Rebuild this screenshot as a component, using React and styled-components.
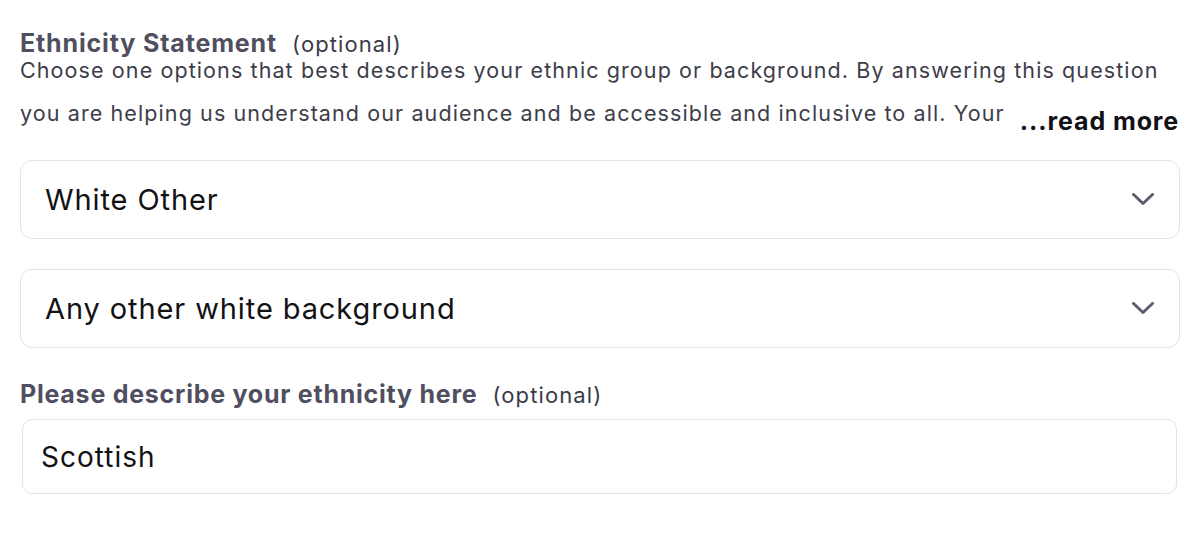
import React from "react";
import styled, { createGlobalStyle } from "styled-components";

const Global = createGlobalStyle`
  html, body { margin: 0; padding: 0; background: #ffffff; }
  body { font-family: Inter, "Noto Sans", sans-serif; }
  * { box-sizing: border-box; }
`;

const Page = styled.div`
  width: 1200px;
  height: 538px;
  padding: 31px 20px 0 20px;
  display: flex;
  flex-direction: column;
`;

const LabelRow = styled.div`
  display: flex;
  align-items: baseline;
  gap: 15px;
  line-height: 25px;
  color: #4f4f60;
  margin-top: ${(p) => p.$mt || 0}px;
`;

const LabelText = styled.span`
  font-weight: 700;
  font-size: 25px;
  letter-spacing: ${(p) => p.$ls ?? 0.85}px;
`;

const Optional = styled.span`
  font-weight: 400;
  font-size: 22px;
  letter-spacing: 1.1px;
  color: #3a3a46;
`;

const Description = styled.p`
  margin: -8px 0 0 0;
  font-size: 21.5px;
  letter-spacing: 1.1px;
  line-height: 43px;
  color: #3d3d49;
  width: 1160px;
  height: 86px;
`;

const ReadMore = styled.button`
  display: inline-block;
  margin-left: 15px;
  vertical-align: -9px;
  border: none;
  background: transparent;
  padding: 0;
  font-family: inherit;
  font-weight: 700;
  font-size: 25px;
  line-height: 26px;
  letter-spacing: 0.9px;
  color: #111116;
  cursor: pointer;
`;

const Select = styled.div`
  display: flex;
  align-items: center;
  justify-content: space-between;
  height: 79px;
  border: 1px solid #e4e4e8;
  border-radius: 12px;
  padding: 0 25px 0 24px;
  margin-top: ${(p) => p.$mt}px;
  font-size: 29px;
  letter-spacing: 0.9px;
  color: #121214;
  background: #fff;
`;

const Chevron = () => (
  <svg width="22" height="13" viewBox="0 0 22 13" fill="none">
    <path d="M1.5 1.5 L11 10.5 L20.5 1.5" stroke="#5e5e6f" strokeWidth="3" strokeLinecap="round" strokeLinejoin="round" />
  </svg>
);

const Input = styled.div`
  display: flex;
  align-items: center;
  height: 75px;
  margin: 11px 3px 0 2px;
  border: 1px solid #e4e4e8;
  border-radius: 10px;
  padding: 0 18px;
  font-size: 28px;
  letter-spacing: 1px;
  color: #121214;
`;

export default function App() {
  return (
    <>
      <Global />
      <Page>
        <LabelRow>
          <LabelText>Ethnicity Statement</LabelText>
          <Optional>(optional)</Optional>
        </LabelRow>
        <Description>
          Choose one options that best describes your ethnic group or background. By answering this question you are helping us understand our audience and be accessible and inclusive to all. Your
          <ReadMore>...read more</ReadMore>
        </Description>
        <Select $mt={25}>
          <span>White Other</span>
          <Chevron />
        </Select>
        <Select $mt={30}>
          <span>Any other white background</span>
          <Chevron />
        </Select>
        <LabelRow $mt={34}>
          <LabelText $ls={0.75}>Please describe your ethnicity here</LabelText>
          <Optional>(optional)</Optional>
        </LabelRow>
        <Input>Scottish</Input>
      </Page>
    </>
  );
}
